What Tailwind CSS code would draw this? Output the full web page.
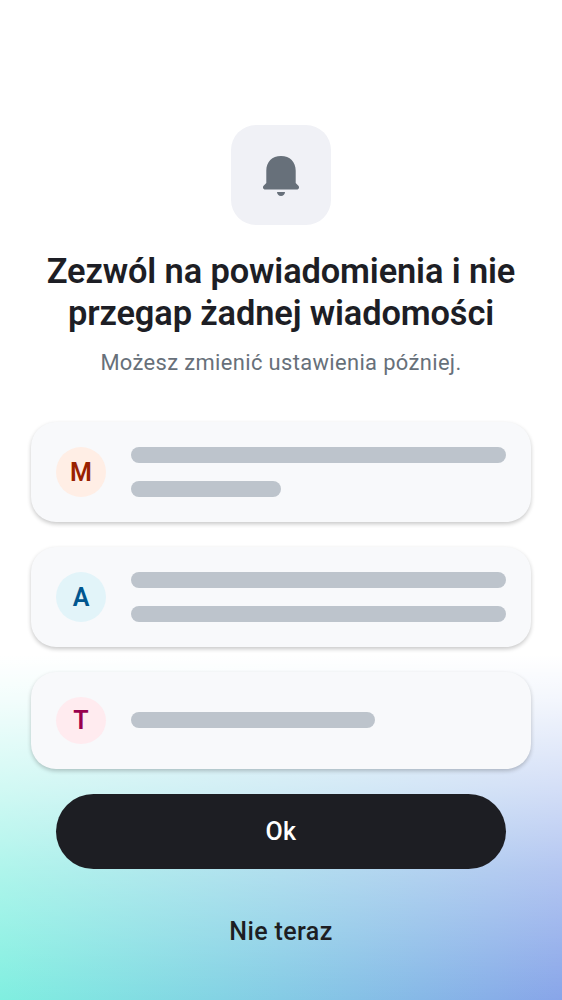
<!DOCTYPE html>
<html lang="pl">
<head>
<meta charset="utf-8">
<meta name="viewport" content="width=device-width, initial-scale=1">
<title>Powiadomienia</title>
<script src="https://cdn.jsdelivr.net/npm/@tailwindcss/browser@4"></script>
</head>
<body class="bg-white font-['Roboto','Liberation_Sans',sans-serif]">
<main class="flex h-[1000px] w-[562px] flex-col items-center overflow-hidden bg-[linear-gradient(to_bottom,#fff_0%,#fff_65.5%,rgba(255,255,255,.9)_70%,rgba(255,255,255,.65)_78.5%,rgba(255,255,255,.37)_87%,rgba(255,255,255,0)_100%),linear-gradient(to_right,#80efe0,#84cbe5_50%,#88a5e9)] pt-[125px]">
  <div class="flex size-[100px] shrink-0 items-center justify-center rounded-[25px] bg-[#f0f1f6] pt-0.5">
    <svg class="h-10 w-9" viewBox="0 0 36 40" fill="#67707a">
      <path d="M18 0C9 0 3.3 6 3.3 14.5V27L.6 29.8C-.8 31.5 .1 33.5 2.3 33.5H33.7C35.9 33.5 36.8 31.5 35.4 29.8L32.7 27V14.5C32.7 6 27 0 18 0Z"/>
      <path d="M14 36H22C22 38.3 20.3 40 18 40S14 38.3 14 36Z"/>
    </svg>
  </div>
  <h1 class="mt-[25px] text-center text-[34.4px] leading-[42px] font-semibold tracking-[-0.12px] whitespace-nowrap text-[#1d1e25]">Zezwól na powiadomienia i nie<br>przegap żadnej wiadomości</h1>
  <p class="mt-[13px] text-center text-[21.9px] leading-[31px] tracking-[0.37px] whitespace-nowrap text-[#67707a]">Możesz zmienić ustawienia później.</p>
  <section class="mt-[44px] flex w-[500px] flex-col gap-[25px]">
    <div class="flex h-[100px] gap-[25px] rounded-[25px] bg-[#f8f9fb] px-[25px] pt-[25px] shadow-[0_2px_4px_rgba(0,0,0,0.22)]">
      <div class="flex size-[50px] items-center justify-center rounded-full bg-[#ffeee5] pt-0.5 text-[25px] font-semibold text-[#992100]">M</div>
      <div class="flex flex-1 flex-col gap-[18.75px]">
        <div class="h-[15.5px] rounded-full bg-[#bdc4cc]"></div>
        <div class="h-[15.5px] w-[150px] rounded-full bg-[#bdc4cc]"></div>
      </div>
    </div>
    <div class="flex h-[100px] gap-[25px] rounded-[25px] bg-[#f8f9fb] px-[25px] pt-[25px] shadow-[0_2px_4px_rgba(0,0,0,0.22)]">
      <div class="flex size-[50px] items-center justify-center rounded-full bg-[#e2f4f9] pt-0.5 text-[25px] font-semibold text-[#00568f]">A</div>
      <div class="flex flex-1 flex-col gap-[18.75px]">
        <div class="h-[15.5px] rounded-full bg-[#bdc4cc]"></div>
        <div class="h-[15.5px] rounded-full bg-[#bdc4cc]"></div>
      </div>
    </div>
    <div class="flex h-[97px] items-center gap-[25px] rounded-[25px] bg-[#f8f9fb] px-[25px] shadow-[0_2px_4px_rgba(0,0,0,0.22)]">
      <div class="flex h-[47px] w-[50px] items-center justify-center rounded-[50%] bg-[#ffebef] pt-px text-[25px] font-semibold text-[#99004d]">T</div>
      <div class="mb-px h-4 w-[244px] rounded-full bg-[#bdc4cc]"></div>
    </div>
  </section>
  <button class="mt-[25px] h-[75px] w-[450px] shrink-0 rounded-full bg-[#1d1e23] text-[25px] font-medium tracking-[0.4px] text-white">Ok</button>
  <button class="mt-[25px] h-[75px] w-[450px] shrink-0 text-[25px] font-medium tracking-[0.4px] text-[#1d1e23]">Nie teraz</button>
</main>
</body>
</html>
